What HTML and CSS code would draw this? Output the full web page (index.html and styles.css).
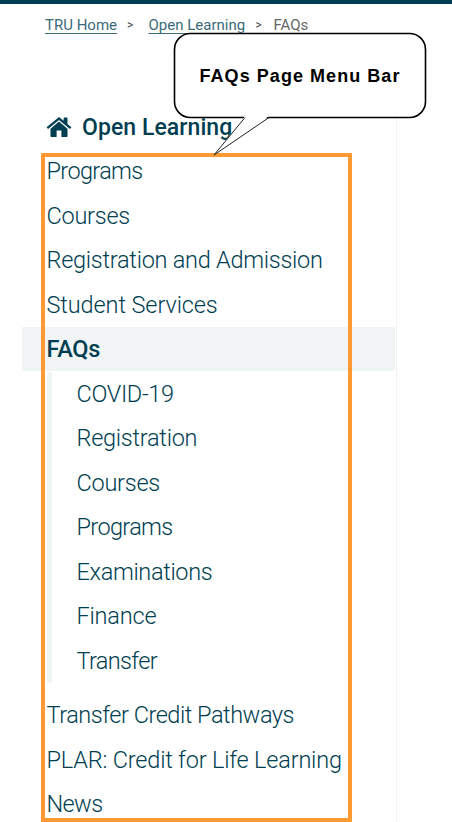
FILE: index.html
```
<!DOCTYPE html>
<html lang="en">
<head>
<meta charset="utf-8">
<title>Open Learning FAQs</title>
<link rel="stylesheet" href="styles.css">
</head>
<body>
<div class="page">
  <nav class="crumbs"><a class="c1">TRU Home</a><span class="sep s1">&gt;</span><a class="c2">Open Learning</a><span class="sep s2">&gt;</span><span class="c3">FAQs</span></nav>
  <aside class="sidebar">
    <h2 class="title">
      <svg class="home" viewBox="0 0 26 22"><path d="M13 5.6 21.5 12.7V20.3Q21.5 21 20.8 21H15.4V14.6H10.6V21H5.2Q4.5 21 4.5 20.3V12.7Z"/><path d="M13 1 17.6 4.8V2.2Q17.6 1.6 18.2 1.6H20.9Q21.5 1.6 21.5 2.2V8L25.4 11.3 23.9 13 13 3.9 2.1 13 .6 11.3Z"/></svg>
      <span>Open Learning</span>
    </h2>
    <ul class="menu">
      <li><a class="w1">Programs</a></li>
      <li><a class="w2">Courses</a></li>
      <li><a class="w3">Registration and Admission</a></li>
      <li><a class="w4">Student Services</a></li>
      <li class="current"><a class="w2">FAQs</a></li>
    </ul>
    <ul class="submenu">
      <li><a class="w5">COVID-19</a></li>
      <li><a class="w3">Registration</a></li>
      <li><a class="w2">Courses</a></li>
      <li><a class="w1">Programs</a></li>
      <li><a class="w5">Examinations</a></li>
      <li><a class="w6">Finance</a></li>
      <li><a class="w1">Transfer</a></li>
    </ul>
    <ul class="menu">
      <li><a class="w7">Transfer Credit Pathways</a></li>
      <li><a class="w6">PLAR: Credit for Life Learning</a></li>
      <li><a class="w1">News</a></li>
    </ul>
  </aside>
  <div class="highlight"></div>
  <div class="callout">
    <svg class="bubble" viewBox="0 0 256 128"><rect x="2.5" y="2.5" width="251" height="84" rx="16" fill="#fff" stroke="#000" stroke-width="1.6"/><path d="M73 85 42 124 97 85Z" fill="#fff"/><path d="M73 86.5 42 124 97 86.5" fill="none" stroke="#222" stroke-width="1"/></svg>
    <span class="label">FAQs Page Menu Bar</span>
  </div>
</div>
</body>
</html>
```
FILE: styles.css
```
* { box-sizing: border-box; }
body { margin: 0; background: #fff; font-family: Roboto, "Liberation Sans", sans-serif; color: #003e51; }
.page { position: relative; height: 822px; overflow: hidden; border-top: 4px solid #003e51; }
.crumbs { display: grid; grid-template-columns: 82px 21.5px 107px 18px auto; height: 96px; padding: 11px 0 0 45px; font-size: 15px; line-height: 20px; font-weight: 400; white-space: nowrap; justify-content: start; }
.crumbs a { justify-self: start; align-self: start; color: #3a6b79; text-decoration: underline; text-underline-offset: 3px; }
.sep { color: #444; font-size: 12px; }
.c3 { color: #666; }
.sidebar { width: 375px; height: 722px; margin-left: 22px; border-right: 1px solid #f0f3f4; }
.title { display: flex; align-items: center; height: 49px; margin: 0; padding: 5px 0 0 24px; font-size: 23px; font-weight: 500; letter-spacing: .07px; white-space: nowrap; }
.home { width: 26px; height: 22px; margin-right: 10px; fill: #003e51; }
.menu, .submenu { list-style: none; margin: 0; padding: 0; }
.menu li, .submenu li { height: 44.5px; line-height: 44.5px; font-size: 23.5px; font-weight: 300; white-space: nowrap; }
.menu li { padding-left: 24.5px; width: 373px; }
.menu .current { height: 44px; margin-bottom: .5px; background: #f0f4f5; font-weight: 500; }
.submenu { margin: 0 0 10px 25px; border-left: 5px solid #f0f4f5; }
.submenu li { padding-left: 24.5px; }
.w1 { letter-spacing: -.64px; }
.w2 { letter-spacing: -.25px; }
.w3 { letter-spacing: -.26px; }
.w4 { letter-spacing: -.1px; }
.w5 { letter-spacing: -.34px; }
.w6 { letter-spacing: -.19px; }
.w7 { letter-spacing: -.47px; }
.highlight { position: absolute; left: 41px; top: 149px; width: 311px; height: 669px; border: 4px solid #ff9933; }
.callout { position: absolute; left: 172px; top: 27px; width: 256px; height: 128px; }
.bubble { position: absolute; left: 0; top: 0; width: 256px; height: 128px; }
.label { position: absolute; left: 27.5px; top: 33px; font: bold 18px/24px "Liberation Sans", Arial, sans-serif; letter-spacing: 1.05px; color: #000; white-space: nowrap; }
```
